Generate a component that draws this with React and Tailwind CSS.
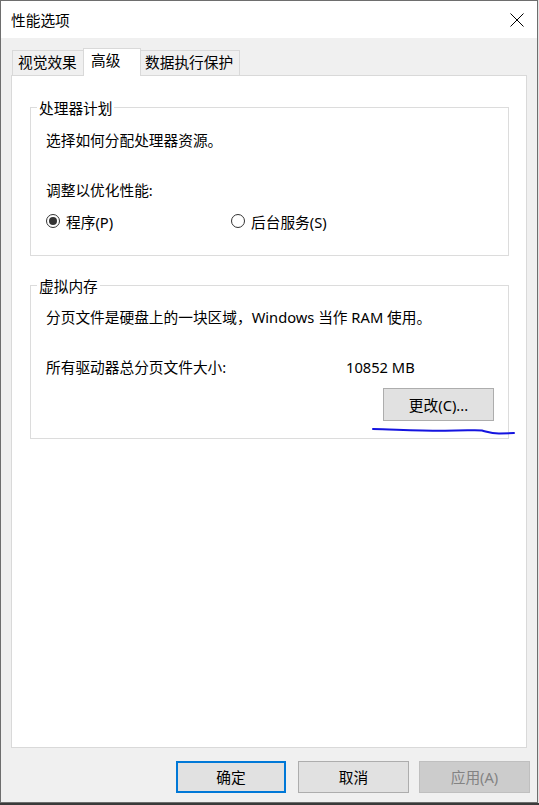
import React from 'react';

const font = { fontFamily: '"Noto Sans", "Noto Sans CJK SC", sans-serif' };

const Radio = ({ checked, label }) => (
  <div className="flex items-center">
    <span className="w-[14px] h-[14px] rounded-full border border-[#333333] bg-white flex items-center justify-center -mt-[2px]">
      {checked && <span className="w-[8px] h-[8px] rounded-full bg-[#333333]" />}
    </span>
    <span className="ml-[6px]">{label}</span>
  </div>
);

const GroupBox = ({ title, className, children }) => (
  <div className={`relative ml-[18px] w-[479px] border border-[#dcdcdc] ${className}`}>
    <span className="absolute -top-[10px] left-[6px] bg-white px-[2px] leading-[20px]">{title}</span>
    <div className="pl-[15px] pr-[14px]">{children}</div>
  </div>
);

export default function App() {
  return (
    <div className="relative w-[539px] h-[805px] bg-[#e4e4e4] text-[14.7px] leading-[20px] text-black" style={font}>
      {/* dialog window */}
      <div className="w-[538px] h-[803px] border border-[#6e6e6e] flex flex-col bg-[#f0f0f0]">
        {/* title bar */}
        <div className="h-[37px] bg-white flex items-center justify-between">
          <span className="pl-[10px]">性能选项</span>
          <svg width="14" height="14" viewBox="0 0 14 14" className="mr-[13px]">
            <path d="M0.5 0.5 L13.5 13.5 M13.5 0.5 L0.5 13.5" stroke="#000" strokeWidth="1" fill="none" />
          </svg>
        </div>

        {/* tabs */}
        <div className="relative z-10 flex items-end pl-[11px] mt-[10px]">
          <div className="w-[71px] h-[25px] mb-[1px] border-l border-t border-[#d9d9d9] pl-[5px] pt-[1px]">视觉效果</div>
          <div className="w-[58px] h-[28px] border-l border-t border-r border-[#d9d9d9] bg-white pl-[7px] pt-[1px]">高级</div>
          <div className="w-[99px] h-[25px] mb-[1px] border-t border-r border-[#d9d9d9] pl-[4px] pt-[1px]">数据执行保护</div>
        </div>

        {/* panel */}
        <div className="-mt-[1px] ml-[10px] w-[516px] h-[673px] border border-[#d9d9d9] bg-white">
          <GroupBox title="处理器计划" className="mt-[31px] h-[149px]">
            <div className="pt-[22px]">选择如何分配处理器资源。</div>
            <div className="mt-[30px]">调整以优化性能:</div>
            <div className="mt-[12px] flex">
              <div className="w-[185px]">
                <Radio checked label="程序(P)" />
              </div>
              <Radio label="后台服务(S)" />
            </div>
          </GroupBox>

          <GroupBox title="虚拟内存" className="mt-[29px] h-[154px]">
            <div className="pt-[21px]">分页文件是硬盘上的一块区域，Windows 当作 RAM 使用。</div>
            <div className="mt-[30px] flex">
              <span className="w-[300px]">所有驱动器总分页文件大小:</span>
              <span>10852 MB</span>
            </div>
            <div className="mt-[11px] flex justify-end">
              <button className="w-[111px] h-[33px] border border-[#adadad] bg-[#e1e1e1]">更改(C)...</button>
            </div>
          </GroupBox>
        </div>

        {/* dialog buttons */}
        <div className="mt-[13px] flex justify-end pr-[7px]">
          <button className="w-[110px] h-[32px] border-2 border-[#0078d7] bg-[#e1e1e1]">确定</button>
          <button className="ml-[12px] w-[111px] h-[32px] border border-[#adadad] bg-[#e1e1e1]">取消</button>
          <button className="ml-[10px] w-[111px] h-[32px] border border-[#bfbfbf] bg-[#cccccc] text-[#838383]">应用(A)</button>
        </div>
      </div>
      <div className="h-[2px] bg-[#3a3a3a]" />

      {/* hand-drawn blue underline */}
      <svg className="absolute inset-0 pointer-events-none" width="539" height="805" viewBox="0 0 539 805">
        <path
          d="M373 429 C 395 429.5, 420 431, 445 430.8 S 475 429.5, 482 430.5 C 488 432, 492 433.8, 500 433.5 L 514 433"
          stroke="#1414e0"
          strokeWidth="2"
          fill="none"
          strokeLinecap="round"
        />
      </svg>
    </div>
  );
}
